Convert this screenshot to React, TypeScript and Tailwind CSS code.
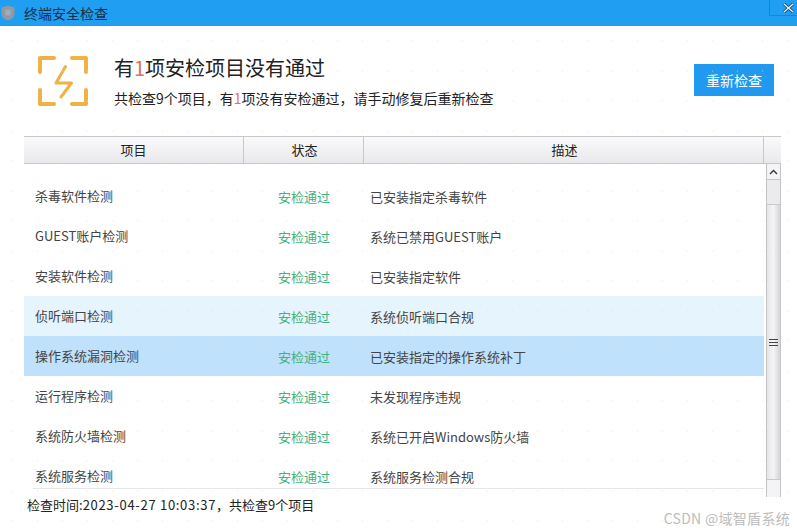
const ROWS = [
  { name: "杀毒软件检测", desc: "已安装指定杀毒软件" },
  { name: "GUEST账户检测", desc: "系统已禁用GUEST账户" },
  { name: "安装软件检测", desc: "已安装指定软件" },
  { name: "侦听端口检测", desc: "系统侦听端口合规", bg: "bg-[#e6f4fe]" },
  { name: "操作系统漏洞检测", desc: "已安装指定的操作系统补丁", bg: "bg-[#bfe1fb]" },
  { name: "运行程序检测", desc: "未发现程序违规" },
  { name: "系统防火墙检测", desc: "系统已开启Windows防火墙" },
  { name: "系统服务检测", desc: "系统服务检测合规" },
];

function WarnIcon() {
  return (
    <svg width="50" height="50" viewBox="0 0 50 50" fill="none" className="shrink-0">
      <g stroke="#efb244" strokeWidth="4" strokeLinecap="round" strokeLinejoin="round">
        <path d="M16 2H2v14" />
        <path d="M34 2h14v14" />
        <path d="M2 34v14h14" />
        <path d="M48 34v14H34" />
      </g>
      <path d="M27.5 10.5 18 27h15.5L23 41" stroke="#efb244" strokeWidth="3" strokeLinejoin="round" strokeLinecap="round" />
    </svg>
  );
}

function Scrollbar() {
  return (
    <div className="w-[15px] ml-[2px] h-[333px] flex flex-col bg-[#ebebee] border-x border-[#c4c4c8]">
      <div className="h-4 bg-[#f4f4f6] border-b border-[#c4c4c8] flex items-center justify-center">
        <svg width="9" height="6" viewBox="0 0 9 6" fill="none">
          <path d="M1 5 4.5 1.5 8 5" stroke="#333" strokeWidth="1.4" />
        </svg>
      </div>
      <div className="h-[8px]" />
      <div className="flex-1 mt-[16px] bg-gradient-to-r from-[#e6e6ea] via-[#f4f4f6] to-[#d4d4d9] border-y border-[#c8c8cc] flex flex-col items-center justify-center gap-[2px]">
        <div className="w-[9px] h-px bg-[#444]" />
        <div className="w-[9px] h-px bg-[#444]" />
        <div className="w-[9px] h-px bg-[#444]" />
      </div>
      <div className="h-[17px] bg-[#f4f4f6]" />
    </div>
  );
}

export default function App() {
  return (
    <div className="relative w-[797px] h-[532px] overflow-hidden bg-white text-[#333] font-['Noto_Sans_CJK_SC',sans-serif]">
      {/* Title bar */}
      <div className="h-[26px] bg-[#1f9ef2] flex items-center">
        <svg width="14" height="16" viewBox="0 0 14 16" className="ml-[1px]">
          <path d="M7 0.5 13.5 2.5V9C13.500 12.500 10 14.500 7 15.500 4 14.500 0.500 12.500 0.500 9V2.500Z" fill="#8f9aa5" />
          <circle cx="7" cy="7.500" r="3" fill="#a3adb6" />
        </svg>
        <span className="ml-[9px] text-sm text-[#10304a]">终端安全检查</span>
        <div className="ml-auto self-start w-[28px] h-4 border-l border-b border-[#1686d4] flex items-center justify-end pr-[3px]">
          <svg width="11" height="10" viewBox="0 0 11 10">
            <path d="M1 1 10 9M10 1 1 9" stroke="#20405a" strokeWidth="3" />
            <path d="M1 1 10 9M10 1 1 9" stroke="#dff1fd" strokeWidth="1.500" />
          </svg>
        </div>
      </div>

      {/* Summary */}
      <div className="h-[110px] flex items-center pl-[38px] pr-[23px]">
        <WarnIcon />
        <div className="ml-[26px] flex-1">
          <div className="text-[20px] leading-[30px] text-[#222] -mt-[1px]">
            有<span className="text-[#e0705a]">1</span>项安检项目没有通过
          </div>
          <div className="mt-[5px] text-sm leading-[20px] text-[#222]">
            共检查9个项目，有<span className="text-[#e0705a]">1</span>项没有安检通过，请手动修复后重新检查
          </div>
        </div>
        <button className="w-20 h-8 bg-[#2299f0] text-white text-sm -mt-[2px]">重新检查</button>
      </div>

      {/* Table header */}
      <div className="ml-6 w-[757px] h-[28px] flex text-[13px] text-[#222] bg-gradient-to-b from-[#fafafb] to-[#e9e9ed] border-y border-[#c8c8cc]">
        <div className="w-[220px] flex items-center justify-center border-r border-[#c8c8cc]">项目</div>
        <div className="w-[120px] pl-[2px] flex items-center justify-center border-r border-[#c8c8cc]">状态</div>
        <div className="w-[400px] pl-[2px] flex items-center justify-center border-r border-[#c8c8cc]">描述</div>
      </div>

      {/* Table body */}
      <div className="ml-6 flex items-start">
        <div className="w-[740px] flex flex-col">
          <div className="h-[324px] overflow-hidden pt-3">
            {ROWS.map((r) => (
              <div key={r.name} className={`h-10 flex items-center pt-[2px] text-[13px] ${r.bg ?? ""}`}>
                <div className="w-[219px] pl-[11px] pb-[2px] text-[#444]">{r.name}</div>
                <div className="w-[120px] pl-[2px] text-center text-[#3fb27f]">安检通过</div>
                <div className="pl-[7px] text-[#444]">{r.desc}</div>
              </div>
            ))}
          </div>
          <div className="ml-[9px] h-px bg-[#e6e6e6]" />
        </div>
        <Scrollbar />
      </div>

      {/* Footer */}
      <div className="-mt-[2px] pl-[27px] text-[13px] leading-[20px] text-[#222]">
        检查时间:<span className="tracking-[0.7px]">2023-04-27 10:03:37</span>，共检查9个项目
      </div>

      {/* Faint dotted watermark over the window */}
      <div className="absolute inset-x-0 top-[26px] bottom-0 pointer-events-none bg-[radial-gradient(#fbd9bd_0.7px,transparent_1.1px)] bg-[size:25px_30px] opacity-35" />

      <div className="absolute right-[7px] bottom-[5px] text-sm leading-[18px] tracking-[0.3px] text-[#bcbcbc]">CSDN @域智盾系统</div>
    </div>
  );
}
